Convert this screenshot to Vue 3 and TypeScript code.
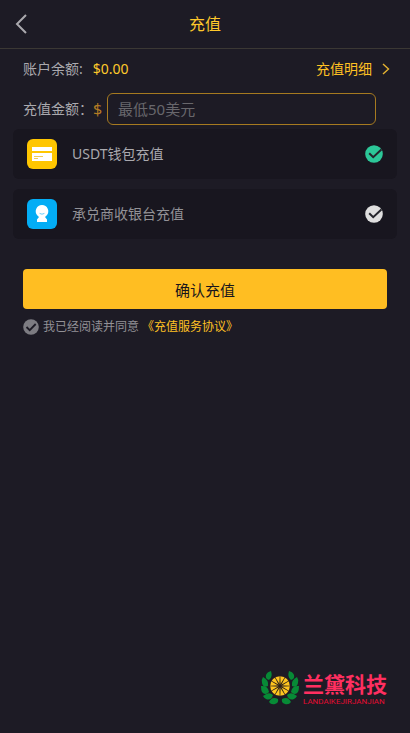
<script setup lang="ts">
import { ref } from 'vue'

type Method = 'usdt' | 'dealer'

const amount = ref('')
const method = ref<Method>('usdt')
const agreed = ref(true)
const balance = '$0.00'
const methods: { id: Method; label: string }[] = [
  { id: 'usdt', label: 'USDT钱包充值' },
  { id: 'dealer', label: '承兑商收银台充值' },
]
const petals = Array.from({ length: 12 }, (_, i) => i * 30)
</script>

<template>
  <div class="page">
    <header class="header">
      <button class="back" type="button" aria-label="返回">
        <svg width="12" height="20" viewBox="0 0 12 20" fill="none" stroke="#aaa9ae" stroke-width="2">
          <path d="M11 1 2 10l9 9" />
        </svg>
      </button>
      <h1>充值</h1>
    </header>

    <main>
      <section class="balance">
        <span class="caption">账户余额:</span>
        <strong>{{ balance }}</strong>
        <a href="#details">
          充值明细
          <svg width="8" height="12" viewBox="0 0 8 12" fill="none" stroke="#e5b331" stroke-width="1.4">
            <path d="m1 1 5.5 5L1 11" />
          </svg>
        </a>
      </section>

      <div class="amount">
        <label for="amount">充值金额：</label>
        <span class="dollar">$</span>
        <input id="amount" v-model="amount" type="text" inputmode="decimal" placeholder="最低50美元" />
      </div>

      <div class="methods" role="radiogroup" aria-label="充值方式">
        <label v-for="item in methods" :key="item.id" class="method" :class="{ active: method === item.id }">
          <svg v-if="item.id === 'usdt'" width="30" height="30" viewBox="0 0 30 30">
            <rect width="30" height="30" rx="6" fill="#ffc600" />
            <path d="M5 8h20v4H5zM5 14h20v8H5z" fill="#fff" />
            <path d="M7 17.5h9M7 19.5h4" stroke="#f2ce55" stroke-width="1" />
          </svg>
          <svg v-else width="30" height="30" viewBox="0 0 30 30">
            <rect width="30" height="30" rx="6" fill="#03adf5" />
            <path d="M15 6a6.2 6.2 0 0 1 4.6 10.4L18 18l2 2.5V23H10v-2.5l2-2.5-1.6-1.6A6.2 6.2 0 0 1 15 6Z" fill="#fff" />
            <path d="M12.6 14.4q2.4 1.6 4.8 0" fill="none" stroke="#03adf5" stroke-width=".6" />
          </svg>
          <span class="name">{{ item.label }}</span>
          <span class="tick">
            <input v-model="method" type="radio" name="method" :value="item.id" />
            <svg width="18" height="18" viewBox="0 0 18 18">
              <circle cx="9" cy="9" r="8.8" fill="currentColor" />
              <path d="m4.2 8.2 4 4 8.2-7.7" fill="none" stroke="#24252b" stroke-width="2" />
            </svg>
          </span>
        </label>
      </div>

      <div class="actions">
        <button class="confirm" type="button">确认充值</button>
        <div class="agreement">
          <label>
            <span class="tick">
              <input v-model="agreed" type="checkbox" />
              <svg width="16" height="16" viewBox="0 0 16 16">
                <circle cx="8" cy="8" r="7.8" fill="currentColor" />
                <path d="m3.5 8 3.2 3.2 6-6.2" fill="none" stroke="#1d1b25" stroke-width="1.8" />
              </svg>
            </span>
            我已经阅读并同意
          </label>
          <a href="#agreement">《充值服务协议》</a>
        </div>
      </div>
    </main>

    <footer class="brand">
      <svg width="38" height="34" viewBox="0 0 38 34">
        <path d="M6 19q2 9 11 10M32 19q-2 9-11 10" fill="none" stroke="#39241f" stroke-width="1.5" />
        <circle cx="19" cy="15" r="10.5" fill="#2c2120" />
        <circle cx="19" cy="15" r="9.8" fill="#ffc51f" />
        <path
          v-for="angle in petals"
          :key="angle"
          d="M18.3 15 18.7 5h.6L19.7 15Z"
          fill="#2a201c"
          :transform="`rotate(${angle} 19 15)`"
        />
        <g fill="#078a36">
          <path d="M10 0q2 6-2 9-4-1-3-5 1-3 5-4ZM2 6q6 3 5 9-5 2-6-3-1-3 1-6ZM0 15q7-1 8 6-4 4-7 0-1-2-1-6ZM2 25q6-5 10-1-2 6-7 4-2-1-3-3ZM8 31q3-6 9-3 1 4-3 5-4 1-6-2Z" />
          <path d="M28 0q-2 6 2 9 4-1 3-5-1-3-5-4ZM36 6q-6 3-5 9 5 2 6-3 1-3-1-6ZM38 15q-7-1-8 6 4 4 7 0 1-2 1-6ZM36 25q-6-5-10-1 2 6 7 4 2-1 3-3ZM30 31q-3-6-9-3-1 4 3 5 4 1 6-2Z" />
        </g>
      </svg>
      <div class="brand-text">
        <span class="brand-name">兰黛科技</span>
        <span class="brand-latin">LANDAIKEJIRJANJIAN</span>
      </div>
    </footer>
  </div>
</template>

<style>
body {
  margin: 0;
  background: #1d1b25;
}
</style>

<style scoped>
.page {
  display: flex;
  flex-direction: column;
  min-height: 100vh;
  box-sizing: border-box;
  background: #1d1b25;
  color: #aaa9ae;
  font: 14px/20px "Noto Sans", "Noto Sans CJK SC", sans-serif;
}
svg {
  display: block;
  flex: none;
}
a {
  color: #ffc123;
  text-decoration: none;
}
button,
input {
  font-family: inherit;
}
.header {
  display: grid;
  grid-template-columns: 48px 1fr 48px;
  align-items: center;
  height: 48px;
  border-bottom: 1px solid #3b3834;
}
.back {
  display: flex;
  align-items: center;
  height: 48px;
  padding: 0 15px;
  border: 0;
  background: none;
}
h1 {
  margin: 0;
  color: #ffc92b;
  font-size: 16px;
  font-weight: 400;
  text-align: center;
}
.balance {
  display: flex;
  align-items: center;
  gap: 10px;
  height: 40px;
  padding: 0 20px 0 23px;
}
.balance strong {
  color: #ffc92b;
  font-weight: 400;
}
.balance a {
  display: flex;
  align-items: center;
  gap: 10px;
  margin-left: auto;
}
.amount {
  display: flex;
  align-items: center;
  padding: 4px 34px 4px 23px;
}
.amount label {
  width: 70px;
  white-space: nowrap;
}
.dollar {
  width: 14px;
  color: #b47b24;
  font-size: 16px;
}
.amount input {
  flex: 1;
  min-width: 0;
  height: 32px;
  box-sizing: border-box;
  padding: 0 10px;
  border: 1px solid #a67a20;
  border-radius: 6px;
  outline: 0;
  background: transparent;
  color: #aaa9ae;
  font-size: 15px;
}
.amount input::placeholder {
  color: #68676c;
  opacity: 1;
}
.methods {
  display: grid;
  gap: 10px;
  padding: 0 13px;
}
.method {
  display: flex;
  align-items: center;
  gap: 15px;
  height: 50px;
  box-sizing: border-box;
  padding: 0 14px;
  border-radius: 6px;
  background: #18161f;
  color: #929196;
}
.method.active {
  color: #aaa9ae;
}
.name {
  flex: 1;
}
.tick {
  display: grid;
  color: #dfdfdf;
}
.tick > * {
  grid-area: 1 / 1;
}
.tick input {
  width: 100%;
  height: 100%;
  margin: 0;
  opacity: 0;
}
.active .tick {
  color: #2cc798;
}
.actions {
  padding: 30px 23px 0;
}
.confirm {
  display: block;
  width: 100%;
  height: 40px;
  padding: 0;
  border: 0;
  border-radius: 4px;
  background: #ffbe22;
  color: #17151c;
  font-size: 15px;
}
.agreement {
  display: flex;
  align-items: center;
  gap: 3px;
  padding-top: 8px;
  color: #929196;
  font-size: 12px;
}
.agreement label {
  display: flex;
  align-items: center;
  gap: 4px;
}
.agreement .tick {
  color: #7d7c82;
}
.brand {
  display: flex;
  align-items: center;
  gap: 4px;
  justify-content: flex-end;
  margin-top: auto;
  padding: 0 23px 27px 0;
}
.brand-text {
  display: flex;
  flex-direction: column;
  color: #ff2f60;
}
.brand-name {
  font-size: 21px;
  font-weight: 700;
  line-height: 28px;
}
.brand-latin {
  color: #e40b32;
  font: 8px/8px Roboto, sans-serif;
}
</style>
